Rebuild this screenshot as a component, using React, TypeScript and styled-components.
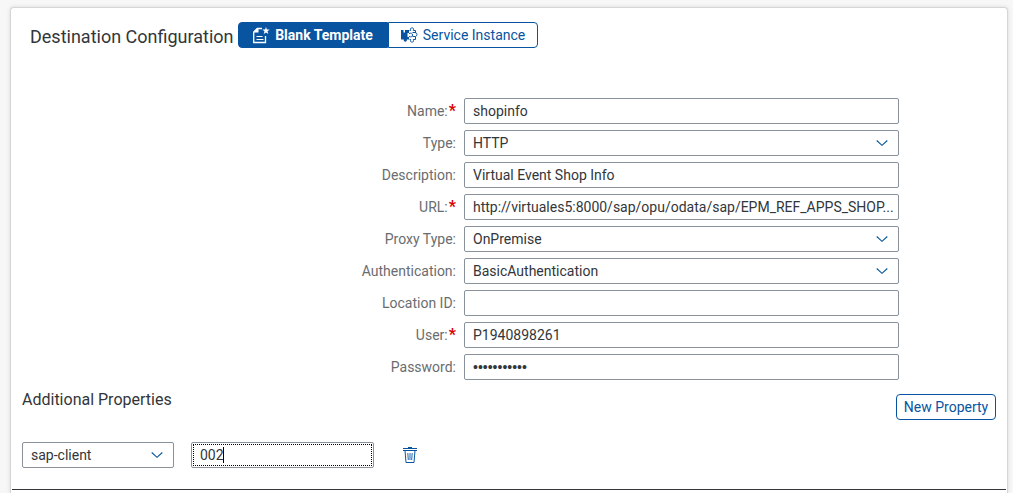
import React from "react";
import styled, { createGlobalStyle } from "styled-components";

const GlobalStyle = createGlobalStyle`
  *, *::before, *::after { box-sizing: border-box; }
  body {
    margin: 0;
    background: #f7f7f7;
    color: #32363a;
    font: 14px/20px Roboto, "Liberation Sans", sans-serif;
  }
  button, input, select { font: inherit; color: inherit; margin: 0; }
`;

const Page = styled.div`
  min-height: 100vh;
  padding: 7px 5px 0 10px;
  display: flex;
  overflow: hidden;
`;

const Panel = styled.main`
  flex: 1;
  min-width: 0;
  background: #fff;
  border: 1px solid #d5d5d5;
  border-bottom: 0;
  border-radius: 4px 4px 0 0;
  box-shadow: 0 0 4px rgba(0, 0, 0, 0.12);
`;

const Header = styled.header`
  display: flex;
  align-items: flex-start;
  gap: 4px;
  padding: 14px 19px 0;
`;

const Title = styled.h1`
  margin: 0;
  padding-top: 2px;
  font-size: 18px;
  line-height: 26px;
  font-weight: 400;
`;

const Segmented = styled.div`
  display: flex;
`;

const Segment = styled.button<{ $active?: boolean }>`
  display: flex;
  align-items: center;
  justify-content: center;
  gap: 5px;
  width: 150px;
  height: 26px;
  padding: 0;
  border: 1px solid #0854a0;
  border-radius: ${(p) => (p.$active ? "4px 0 0 4px" : "0 4px 4px 0")};
  background: ${(p) => (p.$active ? "#0854a0" : "#fff")};
  color: ${(p) => (p.$active ? "#fff" : "#0854a0")};
  font-weight: ${(p) => (p.$active ? 700 : 400)};
`;

const Form = styled.form`
  display: grid;
  gap: 6px;
  padding-top: 48px;
`;

const Field = styled.div`
  display: grid;
  grid-template-columns: 453fr 435fr 108fr;
  align-items: center;
`;

const Label = styled.label<{ $required?: boolean }>`
  padding-right: 8px;
  text-align: right;
  color: #6a6d70;
  &::after {
    content: ${(p) => (p.$required ? '"*"' : "none")};
    margin-left: 1px;
    color: #d00;
    font-size: 16px;
    line-height: 16px;
    font-weight: 700;
  }
`;

const TextInput = styled.input`
  width: 100%;
  min-width: 0;
  height: 26px;
  padding: 0 0 0 8px;
  border: 1px solid #89919a;
  border-radius: 2px;
  background: #fff;
  text-overflow: ellipsis;
  outline: none;
  &[type="password"] { font-family: "Liberation Sans", sans-serif; }
`;

const SelectBox = styled.div`
  display: grid;
  align-items: center;
  > * { grid-area: 1 / 1; }
  > svg { justify-self: end; margin-right: 11px; pointer-events: none; }
`;

const Select = styled.select`
  appearance: none;
  width: 100%;
  height: 26px;
  padding: 0 32px 0 8px;
  border: 1px solid #89919a;
  border-radius: 2px;
  background: #fff;
`;

const Toolbar = styled.div`
  display: flex;
  justify-content: space-between;
  align-items: flex-start;
  padding: 0 11px;
`;

const SectionTitle = styled.h2`
  margin: 0;
  padding-top: 8px;
  font-size: 16px;
  line-height: 24px;
  font-weight: 400;
`;

const OutlineButton = styled.button`
  width: 100px;
  height: 26px;
  margin-top: 14px;
  padding: 0;
  border: 1px solid #0854a0;
  border-radius: 4px;
  background: #fff;
  color: #0854a0;
`;

const PropertyRow = styled.div`
  display: grid;
  grid-template-columns: 152px 183px 40px;
  column-gap: 17px;
  align-items: center;
  padding: 22px 10px 21px;
  border-bottom: 1px solid #32363a;
  margin: 0 1px;
`;

const FocusBox = styled.div`
  position: relative;
`;

const FocusedInput = styled(TextInput)`
  display: block;
  outline: 1px dotted #000;
  outline-offset: -3px;
  caret-color: transparent;
`;

const Caret = styled.span`
  position: absolute;
  top: 5px;
  left: 32px;
  width: 1px;
  height: 16px;
  background: #000;
`;

const IconButton = styled.button`
  display: flex;
  align-items: center;
  justify-content: center;
  width: 38px;
  height: 26px;
  padding: 0;
  border: 0;
  background: none;
  color: #0854a0;
`;

const Chevron = () => (
  <svg width="12" height="8" viewBox="0 0 12 8" fill="none" stroke="#0854a0" strokeWidth="1.1" aria-hidden="true">
    <path d="M.7 1.500 6 6.300l5.300-4.800" />
  </svg>
);

const TemplateIcon = () => (
  <svg width="18" height="18" viewBox="0 0 18 18" fill="none" stroke="currentColor" aria-hidden="true">
    <path d="M10 2.500H5.500L1.700 6.300v10.200h11.800V10" strokeWidth="1.300" />
    <path d="M1.500 6.500V5.500L5 2h1.500v4.500z" fill="currentColor" stroke="none" />
    <path d="M4.500 10.500h6M4.500 13.500h7" />
    <path d="m14 1 .9 2.500 2.800.1-2.200 1.700.8 2.700L14 6.500 11.700 8l.8-2.700-2.200-1.700 2.800-.1z" fill="currentColor" stroke="none" />
  </svg>
);

const ServiceIcon = () => (
  <svg width="18" height="18" viewBox="0 0 18 18" fill="none" stroke="currentColor" aria-hidden="true">
    <path d="M1 4h2.500v2.500h1.500V4H9v3H7.500v4H9v2.500H6.800a1.600 1.600 0 1 1-3 0H1z" fill="currentColor" stroke="none" />
    <path d="M9.500 4.500h1.200c-.6-1.700.1-2.700 1.300-2.700s1.900 1 1.300 2.700h2.200v2.700M9.500 13.500h1.200c-.6 1.700.1 2.700 1.300 2.700s1.900-1 1.300-2.700h2.200v-2.700" />
    <path d="M9 7.500c2.200-.8 3.500-.2 3.500 1.500s-1.300 2.300-3.500 1.500M12.500 6.500h3c1.900.3 1.900 3.700 0 4h-3" />
  </svg>
);

const TrashIcon = () => (
  <svg width="14" height="16" viewBox="0 0 14 16" fill="none" stroke="currentColor" aria-hidden="true">
    <path d="M5 .5h4M0 1.500h14M0 3.500h14M2 3.500l1 12h8l1-12" />
    <path d="m4.800 6 .5 7M7 6v7M9.200 6l-.5 7" strokeWidth=".9" />
  </svg>
);

type FieldSpec = {
  id: string;
  label: string;
  value: string;
  required?: boolean;
  kind?: "select" | "password";
};

const fields: FieldSpec[] = [
  { id: "name", label: "Name:", value: "shopinfo", required: true },
  { id: "type", label: "Type:", value: "HTTP", kind: "select" },
  { id: "description", label: "Description:", value: "Virtual Event Shop Info" },
  { id: "url", label: "URL:", value: "http://virtuales5:8000/sap/opu/odata/sap/EPM_REF_APPS_SHOP...", required: true },
  { id: "proxy", label: "Proxy Type:", value: "OnPremise", kind: "select" },
  { id: "auth", label: "Authentication:", value: "BasicAuthentication", kind: "select" },
  { id: "location", label: "Location ID:", value: "" },
  { id: "user", label: "User:", value: "P1940898261", required: true },
  { id: "password", label: "Password:", value: "abcdefghijk", kind: "password" },
];

const Dropdown = ({ id, value, label }: { id: string; value: string; label?: string }) => (
  <SelectBox>
    <Select id={id} defaultValue={value} aria-label={label}>
      <option>{value}</option>
    </Select>
    <Chevron />
  </SelectBox>
);

export default function App() {
  return (
    <Page>
      <GlobalStyle />
      <Panel>
        <Header>
          <Title>Destination Configuration</Title>
          <Segmented>
            <Segment type="button" $active aria-pressed="true">
              <TemplateIcon />
              Blank Template
            </Segment>
            <Segment type="button" aria-pressed="false">
              <ServiceIcon />
              Service Instance
            </Segment>
          </Segmented>
        </Header>
        <Form>
          {fields.map((f) => (
            <Field key={f.id}>
              <Label htmlFor={f.id} $required={f.required}>{f.label}</Label>
              {f.kind === "select" ? (
                <Dropdown id={f.id} value={f.value} />
              ) : (
                <TextInput
                  id={f.id}
                  type={f.kind === "password" ? "password" : "text"}
                  autoComplete="off"
                  required={f.required}
                  defaultValue={f.value}
                />
              )}
            </Field>
          ))}
        </Form>
        <Toolbar>
          <SectionTitle>Additional Properties</SectionTitle>
          <OutlineButton type="button">New Property</OutlineButton>
        </Toolbar>
        <PropertyRow>
          <Dropdown id="property-key" value="sap-client" label="Property name" />
          <FocusBox>
            <FocusedInput aria-label="Property value" defaultValue="002" />
            <Caret />
          </FocusBox>
          <IconButton type="button" aria-label="Delete property">
            <TrashIcon />
          </IconButton>
        </PropertyRow>
      </Panel>
    </Page>
  );
}
